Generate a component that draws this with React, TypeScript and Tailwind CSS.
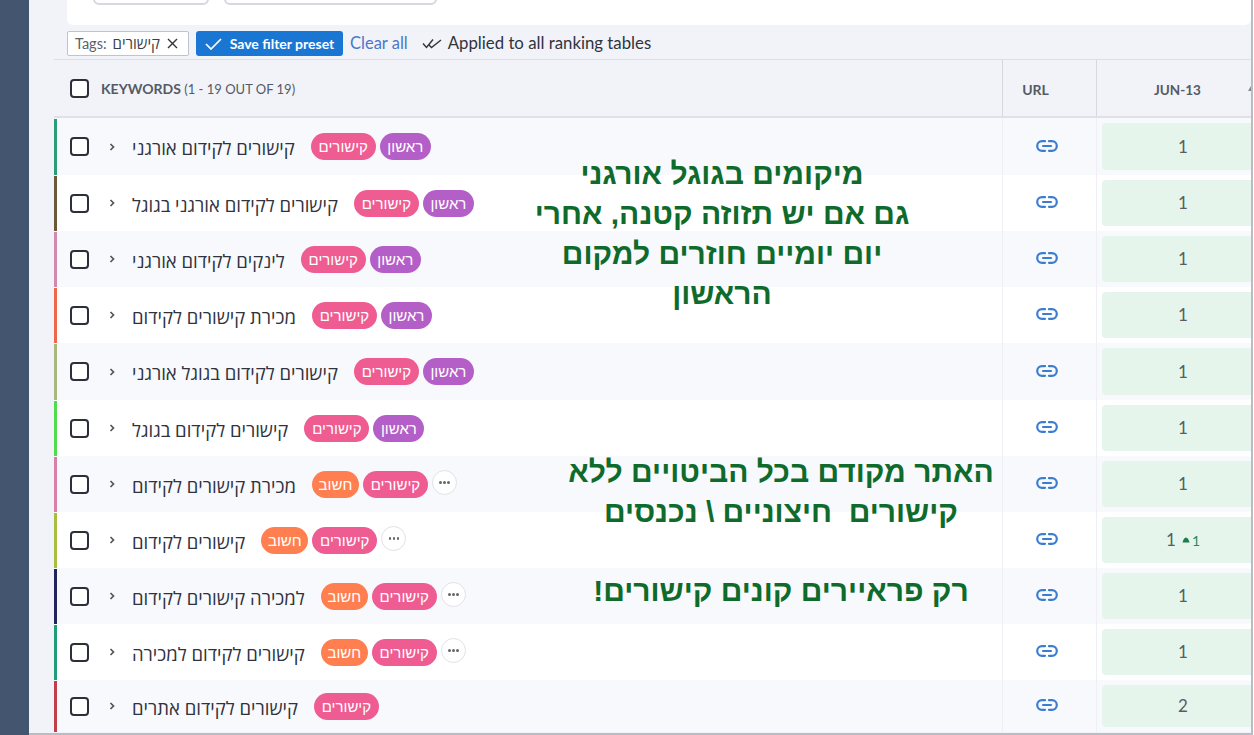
import React from "react";

const PINK = "קישורים";
const PURPLE = "ראשון";
const ORANGE = "חשוב";

type Row = { text: string; strip: string; kind: "a" | "b" | "c"; rank: string; up?: boolean; y: string };

const rows: Row[] = [
  { text: "קישורים לקידום אורגני", strip: "bg-[#2a9d78]", kind: "a", rank: "1", y: "h-[57px] bg-[#f8f9fc]" },
  { text: "קישורים לקידום אורגני בגוגל", strip: "bg-[#6b5a3a]", kind: "a", rank: "1", y: "h-[56px] bg-white" },
  { text: "לינקים לקידום אורגני", strip: "bg-[#d08ab0]", kind: "a", rank: "1", y: "h-[56px] bg-[#f8f9fc]" },
  { text: "מכירת קישורים לקידום", strip: "bg-[#f0664a]", kind: "a", rank: "1", y: "h-[56px] bg-white" },
  { text: "קישורים לקידום בגוגל אורגני", strip: "bg-[#a9b87e]", kind: "a", rank: "1", y: "h-[57px] bg-[#f8f9fc]" },
  { text: "קישורים לקידום בגוגל", strip: "bg-[#4fdc4f]", kind: "a", rank: "1", y: "h-[56px] bg-white" },
  { text: "מכירת קישורים לקידום", strip: "bg-[#d77fa8]", kind: "b", rank: "1", y: "h-[56px] bg-[#f8f9fc]" },
  { text: "קישורים לקידום", strip: "bg-[#a9bd3f]", kind: "b", rank: "1", up: true, y: "h-[56px] bg-white" },
  { text: "למכירה קישורים לקידום", strip: "bg-[#20265c]", kind: "b", rank: "1", y: "h-[56px] bg-[#f8f9fc]" },
  { text: "קישורים לקידום למכירה", strip: "bg-[#1f9d78]", kind: "b", rank: "1", y: "h-[56px] bg-white" },
  { text: "קישורים לקידום אתרים", strip: "bg-[#c0404a]", kind: "c", rank: "2", y: "h-[52px] bg-[#f8f9fc]" },
];

function Box() {
  return <span className="block w-[19px] h-[19px] shrink-0 rounded-[4px] border-[2.5px] border-[#2b2f3a] bg-white" />;
}

function Tag({ label, cls }: { label: string; cls: string }) {
  return (
    <span className={`h-[27px] flex items-center justify-center rounded-full text-white text-[15px] shrink-0 ${cls}`}>
      {label}
    </span>
  );
}

function LinkIcon() {
  return (
    <svg width="22" height="12" viewBox="0 0 22 12" fill="none" stroke="#3b7dd0" strokeWidth="2.2" strokeLinecap="round">
      <path d="M9 1.2H6a4.8 4.8 0 0 0 0 9.6h3" />
      <path d="M13 1.2h3a4.8 4.8 0 0 1 0 9.6h-3" />
      <path d="M7 6h8" />
    </svg>
  );
}

function More() {
  return (
    <span className="w-[25px] h-[25px] -mt-[3px] rounded-full border border-[#dfe2ea] bg-white flex items-center justify-center gap-[1.5px] shrink-0">
      <i className="w-[2.5px] h-[2.5px] rounded-full bg-[#666]" />
      <i className="w-[2.5px] h-[2.5px] rounded-full bg-[#666]" />
      <i className="w-[2.5px] h-[2.5px] rounded-full bg-[#666]" />
    </span>
  );
}

function KeywordRow({ r }: { r: Row }) {
  return (
    <div className={`flex ${r.y} w-[1213px]`}>
      <div className={`w-[3px] shrink-0 mt-[1px] ${r.strip}`} />
      <div className="w-[945px] shrink-0 flex items-center pl-[13px]">
        <Box />
        <svg className="ml-[20px] shrink-0" width="6" height="8" viewBox="0 0 6 8" fill="none" stroke="#555" strokeWidth="1.7">
          <path d="M1.5 1l3 3-3 3" />
        </svg>
        <span className="ml-[17px] pt-[3px] text-[18.5px] text-[#2f3340] whitespace-nowrap font-['Open_Sans','Liberation_Sans',sans-serif] shrink-0">
          {r.text}
        </span>
        {r.kind === "a" && (
          <div className="ml-[16px] flex items-center gap-[4px]">
            <Tag label={PINK} cls="w-[65px] bg-[#ee5c92]" />
            <Tag label={PURPLE} cls="w-[51px] bg-[#b45fc8]" />
          </div>
        )}
        {r.kind === "b" && (
          <div className="ml-[16px] flex items-center gap-[4px]">
            <Tag label={ORANGE} cls="w-[47px] bg-[#ff7f50]" />
            <Tag label={PINK} cls="w-[65px] bg-[#ee5c92]" />
            <More />
          </div>
        )}
        {r.kind === "c" && (
          <div className="ml-[16px] flex items-center">
            <Tag label={PINK} cls="w-[65px] bg-[#ee5c92]" />
          </div>
        )}
      </div>
      <div className="w-[94px] shrink-0 border-l border-[#eef0f5] flex items-center justify-center pb-[2px] pr-[6px]">
        <LinkIcon />
      </div>
      <div className="w-[170px] shrink-0 border-l border-[#eef0f5] pl-[5px] pr-[2px] py-[5px]">
        <div className="h-full rounded-l-[4px] bg-[#e6f5ec] flex items-center justify-center gap-[6px] text-[#555f5c] text-[17px]">
          {r.rank}
          {r.up && (
            <span className="flex items-center gap-[2px] text-[#2c8a5f] text-[14px]">
              <svg width="8" height="6" viewBox="0 0 8 6"><path d="M0.5 5.5C1 3 2.5 0.5 4 0.5S7 3 7.5 5.5z" fill="#1f7a4f" /></svg>
              1
            </span>
          )}
        </div>
      </div>
    </div>
  );
}

export default function App() {
  return (
    <div className="w-[1254px] h-[735px] overflow-hidden bg-white flex font-['Lato','Liberation_Sans',sans-serif]">
      <aside className="w-[29px] h-full bg-[#44566f] shrink-0" />
      <main className="relative w-[1224px] h-[735px] bg-[#f1f3f8] overflow-hidden shrink-0 border-r-2 border-b-2 border-[#b9bcc2]">
        {/* filter card */}
        <div className="ml-[38px] h-[25px] bg-white rounded-b-[6px] relative overflow-hidden">
          <div className="absolute left-[26px] -top-[20px] w-[116px] h-[25px] rounded-[6px] border-2 border-[#d5d8de] bg-white" />
          <div className="absolute left-[157px] -top-[20px] w-[213px] h-[25px] rounded-[6px] border-2 border-[#d5d8de] bg-white" />
        </div>
        {/* active filters */}
        <div className="ml-[38px] h-[34px] flex items-end pb-[3px]">
          <span className="h-[25px] w-[122px] flex items-center pl-[7px] gap-[7px] bg-white border border-[#bfc3cc] rounded-[2px] whitespace-nowrap">
            <span className="flex items-center gap-[6px]">
              <span className="text-[14.5px] text-[#5a5f6c]">Tags:</span>
              <span className="text-[15px] text-[#3a3f4a] font-['Open_Sans','Liberation_Sans',sans-serif]">{PINK}</span>
            </span>
            <svg width="11" height="11" viewBox="0 0 11 11" stroke="#333" strokeWidth="1.4"><path d="M1 1l9 9M10 1l-9 9" /></svg>
          </span>
          <span className="ml-[7px] h-[25px] w-[147px] flex items-center justify-center gap-[8px] bg-[#1976d2] rounded-[3px] text-white text-[14px] font-bold whitespace-nowrap">
            <svg width="17" height="12" viewBox="0 0 17 12" fill="none" stroke="#fff" strokeWidth="1.7"><path d="M1 6l5 5L16 1" /></svg>
            Save filter preset
          </span>
          <span className="ml-[7px] h-[25px] flex items-center text-[16.5px] text-[#4a78c8]">Clear all</span>
          <span className="ml-[14px] h-[25px] flex items-center">
            <svg width="20" height="11" viewBox="0 0 20 11" fill="none" stroke="#333" strokeWidth="1.4">
              <path d="M1 5.5l3.5 4L11 1.5" />
              <path d="M6.5 6.5l3 3L19 2" />
            </svg>
          </span>
          <span className="ml-[6px] h-[25px] flex items-center -translate-y-[1px] text-[16.8px] text-[#2f3340] whitespace-nowrap">Applied to all ranking tables</span>
        </div>
        {/* table */}
        <div className="ml-[25px] w-[1213px] border-t border-[#dcdfe6]">
          <div className="flex h-[58px] bg-[#f1f3f8] border-b-2 border-[#dfe1e7] text-[14px] text-[#555a66] font-bold">
            <div className="w-[948px] shrink-0 flex items-center pl-[16px]">
              <Box />
              <span className="ml-[12px] pt-[2px] whitespace-nowrap">
                KEYWORDS <span className="text-[13px] font-normal">(1 - 19 OUT OF 19)</span>
              </span>
            </div>
            <div className="w-[94px] shrink-0 border-l border-[#d5d8de] flex items-center justify-center pt-[2px] pr-[28px]">URL</div>
            <div className="relative w-[170px] shrink-0 border-l border-[#d5d8de] flex items-center justify-center pt-[4px] pr-[8px] text-[13.5px]">
              JUN-13
              <svg className="absolute left-[151px] top-[26px]" width="6" height="5" viewBox="0 0 6 5"><path d="M0 5l3-5 3 5z" fill="#888" /></svg>
            </div>
          </div>
          {rows.map((r, i) => (
            <KeywordRow key={i} r={r} />
          ))}
        </div>
        {/* annotations */}
        <div dir="rtl" className="absolute left-[471px] top-[154px] w-[444px] text-center text-[#0f6b2c] text-[30px] leading-[40px] font-bold font-['Liberation_Sans',sans-serif]">
          <p>מיקומים בגוגל אורגני</p>
          <p>גם אם יש תזוזה קטנה, אחרי</p>
          <p>יום יומיים חוזרים למקום</p>
          <p>הראשון</p>
        </div>
        <div dir="rtl" className="absolute left-[500px] top-[452px] w-[504px] text-center text-[#0f6b2c] text-[30px] leading-[40px] font-bold font-['Liberation_Sans',sans-serif]">
          <p>האתר מקודם בכל הביטויים ללא</p>
          <p>קישורים&nbsp; חיצוניים \ נכנסים</p>
          <p className="mt-[39px]">רק פראיירים קונים קישורים!</p>
        </div>
      </main>
    </div>
  );
}
